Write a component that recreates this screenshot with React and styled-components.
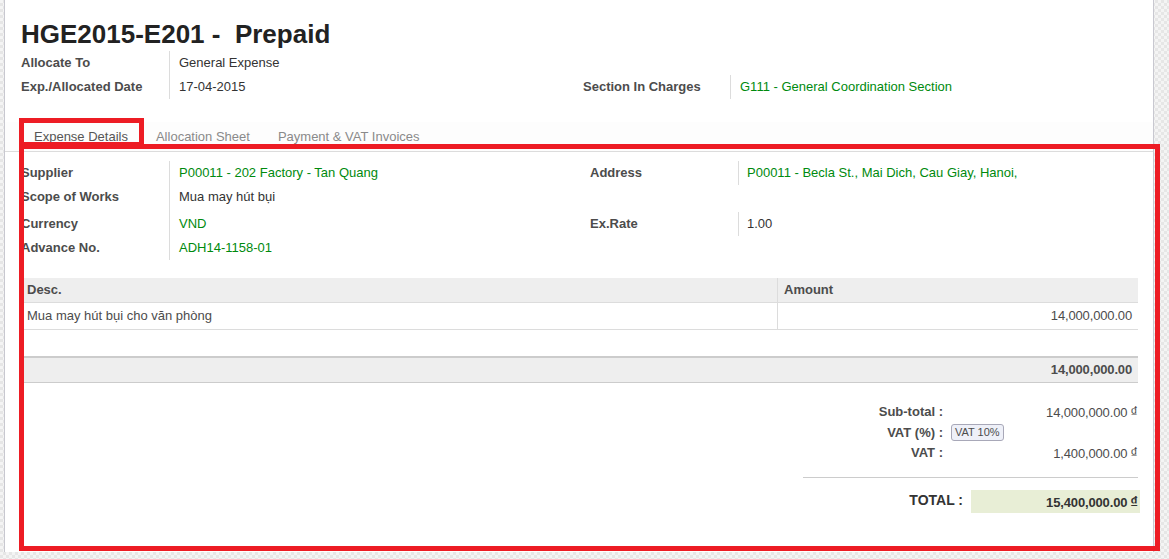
import React from 'react';
import styled, { createGlobalStyle } from 'styled-components';

const GlobalStyle = createGlobalStyle`
  html, body {
    margin: 0;
    padding: 0;
  }
  body {
    font-family: "Liberation Sans", Arial, sans-serif;
    font-size: 13px;
    color: #4c4c4c;
  }
`;

const Page = styled.div`
  min-height: 100vh;
  box-sizing: border-box;
  padding: 0 0 7px 4px;
  background-color: #f4f4f4;
  background-image: conic-gradient(#e6e6e6 25%, transparent 0 50%, #e6e6e6 0 75%, transparent 0);
  background-size: 6px 6px;
`;

const Sheet = styled.div`
  position: relative;
  width: 1150px;
  height: 552px;
  box-sizing: border-box;
  background: #fff;
  border-left: 1px solid #c8c8d0;
  border-right: 1px solid #c8c8d0;
`;

const Header = styled.div`
  padding: 19px 15px 0 16px;
`;

const Title = styled.h1`
  margin: 0;
  font-size: 26px;
  line-height: 30px;
  font-weight: bold;
  color: #222;
  white-space: pre;
`;

/* grille label | valeur | label | valeur */
const FieldGrid = styled.div`
  display: grid;
  grid-template-columns: ${(p) => p.$cols};
  grid-template-rows: ${(p) => p.$rows};
  margin-top: ${(p) => p.$top || 0}px;
`;

const Label = styled.div`
  font-weight: bold;
  color: #4c4c4c;
  line-height: 24px;
  white-space: nowrap;
`;

const Value = styled.div`
  border-left: 1px solid #dcdcdc;
  padding-left: ${(p) => p.$pad || 9}px;
  line-height: 24px;
  white-space: nowrap;
  color: ${(p) => (p.$link ? '#008a0e' : '#333')};
`;

const Empty = styled.div``;

const Tabs = styled.div`
  display: flex;
  margin-top: 23px;
  padding-left: 15px;
  border-bottom: 1px solid #dcdcdc;
  background: #fdfdfd;
`;

const Tab = styled.div`
  padding: 0 14px;
  line-height: 29px;
  color: ${(p) => (p.$active ? '#555' : '#8a8a8a')};
`;

const Body = styled.div`
  padding: 0 15px 0 16px;
`;

const Table = styled.div`
  margin-top: 18px;
`;

const Row = styled.div`
  display: grid;
  grid-template-columns: 1fr 361px;
`;

const HeadCell = styled.div`
  height: 24px;
  line-height: 24px;
  padding: 0 6px;
  background: #eee;
  font-weight: bold;
  color: #4c4c4c;
  border-bottom: 1px solid #dcdcdc;
  border-left: ${(p) => (p.$divided ? '1px solid #dcdcdc' : 'none')};
`;

const Cell = styled.div`
  height: 26px;
  line-height: 26px;
  padding: 0 6px;
  color: #4c4c4c;
  border-bottom: 1px solid #dcdcdc;
  border-left: ${(p) => (p.$divided ? '1px solid #dcdcdc' : 'none')};
  text-align: ${(p) => (p.$right ? 'right' : 'left')};
`;

const Num = styled.span`
  letter-spacing: -0.15px;
`;

const Spacer = styled.div`
  height: 26px;
`;

const FootRow = styled.div`
  height: 24px;
  line-height: 24px;
  padding: 0 6px;
  background: #eee;
  border-top: 2px solid #ccc;
  border-bottom: 1px solid #ccc;
  text-align: right;
  font-weight: bold;
  color: #4c4c4c;
`;

const Totals = styled.div`
  width: 335px;
  margin: 19px 0 0 auto;
`;

const TotalsGrid = styled.div`
  display: grid;
  grid-template-columns: 140px 187px;
  grid-template-rows: 20px 21px 20px;
  column-gap: 8px;
`;

const TotLabel = styled.div`
  font-weight: bold;
  text-align: right;
  line-height: ${(p) => p.$lh || 20}px;
  color: #4c4c4c;
`;

const TotValue = styled.div`
  text-align: ${(p) => (p.$left ? 'left' : 'right')};
  line-height: 20px;
  color: #4c4c4c;
`;

const Cur = styled.span`
  font-size: 15px;
  margin-left: 3px;
`;

const Tag = styled.span`
  display: inline-block;
  margin-top: 2px;
  height: 15px;
  line-height: 15px;
  padding: 0 3px;
  font-size: 11px;
  color: #4c4c4c;
  background: #eef0f8;
  border: 1px solid #a8a8b8;
  border-radius: 3px;
`;

const Rule = styled.div`
  margin-top: 14px;
  border-top: 1px solid #ccc;
`;

const TotalRow = styled.div`
  display: grid;
  grid-template-columns: 1fr 169px;
  column-gap: 8px;
  margin: 12px -2px 0 0;
`;

const TotalLabel = styled.div`
  font-size: 14px;
  font-weight: bold;
  line-height: 20px;
  text-align: right;
  color: #333;
`;

const TotalBox = styled.div`
  height: 23px;
  line-height: 23px;
  padding-right: 2px;
  background: #e8eed6;
  text-align: right;
  font-weight: bold;
  color: #333;
`;

/* cadre rouge d'annotation, posé par-dessus la page */
const Annotation = styled.div`
  position: absolute;
  left: ${(p) => p.$x}px;
  top: ${(p) => p.$y}px;
  width: ${(p) => p.$w}px;
  height: ${(p) => p.$h}px;
  box-sizing: border-box;
  border: 5px solid #ed1c24;
  pointer-events: none;
`;

const App = () => {
  return (
    <Page>
      <GlobalStyle />
      <Sheet>
        <Header>
          <Title>HGE2015-E201 -  Prepaid</Title>
          <FieldGrid $cols="148px 414px 147px 1fr" $rows="24px 24px" $top={2}>
            <Label>Allocate To</Label>
            <Value>General Expense</Value>
            <Empty />
            <Empty />
            <Label>Exp./Allocated Date</Label>
            <Value>17-04-2015</Value>
            <Label>Section In Charges</Label>
            <Value $link>G111 - General Coordination Section</Value>
          </FieldGrid>
        </Header>

        <Tabs>
          <Tab $active>Expense Details</Tab>
          <Tab>Allocation Sheet</Tab>
          <Tab>Payment &amp; VAT Invoices</Tab>
        </Tabs>

        <Body>
          <FieldGrid $cols="148px 421px 148px 1fr" $rows="24px 27px 24px 24px" $top={9}>
            <Label>Supplier</Label>
            <Value $link>P00011 - 202 Factory - Tan Quang</Value>
            <Label>Address</Label>
            <Value $link $pad={8}>P00011 - Becla St., Mai Dich, Cau Giay, Hanoi,</Value>
            <Label>Scope of Works</Label>
            <Value>Mua may hút bụi</Value>
            <Empty />
            <Empty />
            <Label>Currency</Label>
            <Value $link>VND</Value>
            <Label>Ex.Rate</Label>
            <Value $pad={8}>1.00</Value>
            <Label>Advance No.</Label>
            <Value $link>ADH14-1158-01</Value>
            <Empty />
            <Empty />
          </FieldGrid>

          <Table>
            <Row>
              <HeadCell>Desc.</HeadCell>
              <HeadCell $divided>Amount</HeadCell>
            </Row>
            <Row>
              <Cell>Mua may hút bụi cho văn phòng</Cell>
              <Cell $divided $right><Num>14,000,000.00</Num></Cell>
            </Row>
            <Spacer />
            <FootRow><Num>14,000,000.00</Num></FootRow>
          </Table>

          <Totals>
            <TotalsGrid>
              <TotLabel>Sub-total :</TotLabel>
              <TotValue><Num>14,000,000.00</Num><Cur>₫</Cur></TotValue>
              <TotLabel $lh={21}>VAT (%) :</TotLabel>
              <TotValue $left><Tag>VAT 10%</Tag></TotValue>
              <TotLabel>VAT :</TotLabel>
              <TotValue><Num>1,400,000.00</Num><Cur>₫</Cur></TotValue>
            </TotalsGrid>
            <Rule />
            <TotalRow>
              <TotalLabel>TOTAL :</TotalLabel>
              <TotalBox><Num>15,400,000.00</Num><Cur>₫</Cur></TotalBox>
            </TotalRow>
          </Totals>
        </Body>

        <Annotation $x={14} $y={118} $w={125} $h={29} />
        <Annotation $x={14} $y={144} $w={1141} $h={407} />
      </Sheet>
    </Page>
  );
};

export default App;
